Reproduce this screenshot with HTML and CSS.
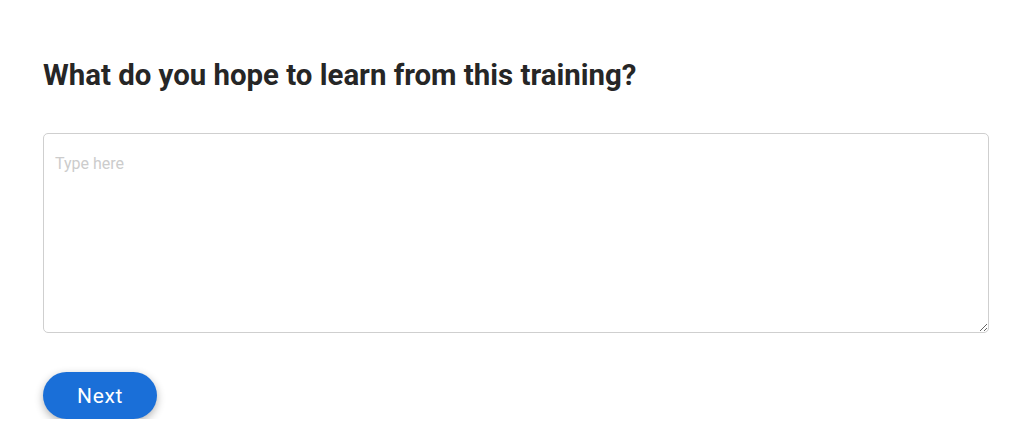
FILE: index.html
```html
<!DOCTYPE html>
<html>
<head>
<meta charset="utf-8">
<link rel="stylesheet" href="styles.css">
</head>
<body>
<main class="page">
  <h1 class="question">What do you hope to learn from this training?</h1>
  <textarea class="answer" placeholder="Type here"></textarea>
  <button class="next">Next</button>
</main>
</body>
</html>
```
FILE: styles.css
```css
html, body {
  margin: 0;
  padding: 0;
  background: #ffffff;
}
.page {
  padding: 55px 35px 0 43px;
  display: flex;
  flex-direction: column;
  align-items: flex-start;
  font-family: Roboto, "Liberation Sans", sans-serif;
}
.question {
  margin: 0;
  font-size: 29.4px;
  font-weight: 700;
  line-height: 40px;
  color: #262626;
}
.answer {
  box-sizing: border-box;
  margin-top: 38px;
  width: 946px;
  height: 200px;
  border: 1px solid #cfcfcf;
  border-radius: 5px;
  padding: 20px 11px;
  font-family: Roboto, "Liberation Sans", sans-serif;
  font-size: 16px;
  color: #333;
  outline: none;
}
.answer::placeholder {
  color: #cccccc;
}
.next {
  margin-top: 39px;
  width: 114px;
  height: 47px;
  border: none;
  border-radius: 24px;
  background: #1a6fd8;
  color: #ffffff;
  font-family: Roboto, "Liberation Sans", sans-serif;
  font-size: 21px;
  font-weight: 400;
  letter-spacing: 0.6px;
  box-shadow: 0 3px 8px rgba(0,0,0,0.3);
}
```
